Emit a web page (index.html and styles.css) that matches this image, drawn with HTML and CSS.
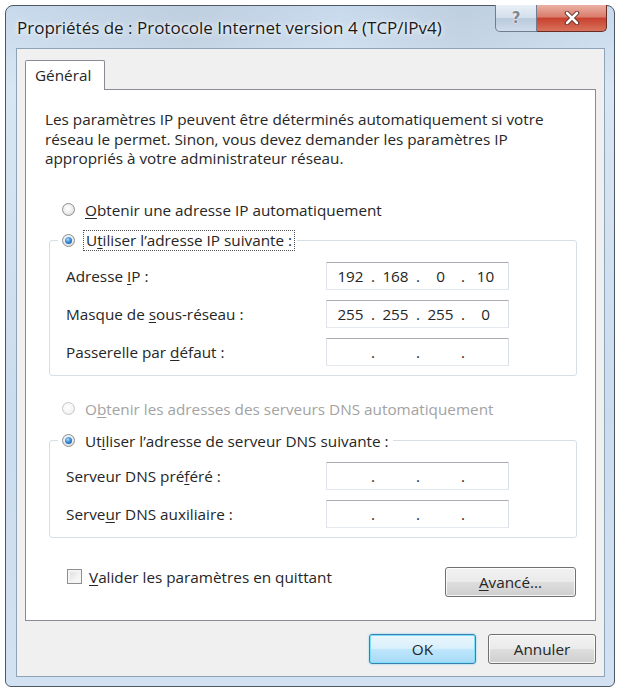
FILE: index.html
```html
<!DOCTYPE html>
<html lang="fr">
<head>
<meta charset="utf-8">
<title>Propriétés de : Protocole Internet version 4 (TCP/IPv4)</title>
<link rel="stylesheet" href="styles.css">
</head>
<body>
<div class="window">
  <div class="titlebar">
    <div class="title">Propriétés de : Protocole Internet version 4 (TCP/IPv4)</div>
    <div class="caption">
      <div class="cap-help">?</div>
      <div class="cap-close">
        <svg width="16" height="14" viewBox="0 0 16 14">
          <path d="M3 2 L13 12 M13 2 L3 12" stroke="#5a2a22" stroke-width="4.4" stroke-linecap="round"/>
          <path d="M3 2 L13 12 M13 2 L3 12" stroke="#ffffff" stroke-width="2.6" stroke-linecap="round"/>
        </svg>
      </div>
    </div>
  </div>
  <div class="client">
    <div class="tabs"><div class="tab">Général</div></div>
    <div class="panel">
      <p class="intro">Les paramètres IP peuvent être déterminés automatiquement si votre<br>réseau le permet. Sinon, vous devez demander les paramètres IP<br>appropriés à votre administrateur réseau.</p>

      <div class="radio-row first">
        <span class="radio"></span>
        <span class="label"><u>O</u>btenir une adresse IP automatiquement</span>
      </div>

      <fieldset class="group">
        <legend class="legend">
          <span class="radio-row">
            <span class="radio checked"></span>
            <span class="label focus">U<u>t</u>iliser l’adresse IP suivante :</span>
          </span>
        </legend>
        <div class="field-row">
          <span class="field-label">Adresse <u>I</u>P :</span>
          <div class="ip"><span class="oct">192</span><span class="dot">.</span><span class="oct">168</span><span class="dot">.</span><span class="oct">0</span><span class="dot">.</span><span class="oct">10</span></div>
        </div>
        <div class="field-row">
          <span class="field-label">Masque de <u>s</u>ous-réseau :</span>
          <div class="ip"><span class="oct">255</span><span class="dot">.</span><span class="oct">255</span><span class="dot">.</span><span class="oct">255</span><span class="dot">.</span><span class="oct">0</span></div>
        </div>
        <div class="field-row">
          <span class="field-label">Passerelle par <u>d</u>éfaut :</span>
          <div class="ip"><span class="oct"></span><span class="dot">.</span><span class="oct"></span><span class="dot">.</span><span class="oct"></span><span class="dot">.</span><span class="oct"></span></div>
        </div>
      </fieldset>

      <div class="radio-row disabled second">
        <span class="radio"></span>
        <span class="label">O<u>b</u>tenir les adresses des serveurs DNS automatiquement</span>
      </div>

      <fieldset class="group group-dns">
        <legend class="legend">
          <span class="radio-row">
            <span class="radio checked"></span>
            <span class="label">Ut<u>i</u>liser l’adresse de serveur DNS suivante :</span>
          </span>
        </legend>
        <div class="field-row">
          <span class="field-label">Serveur DNS pré<u>f</u>éré :</span>
          <div class="ip"><span class="oct"></span><span class="dot">.</span><span class="oct"></span><span class="dot">.</span><span class="oct"></span><span class="dot">.</span><span class="oct"></span></div>
        </div>
        <div class="field-row">
          <span class="field-label">Serve<u>u</u>r DNS auxiliaire :</span>
          <div class="ip"><span class="oct"></span><span class="dot">.</span><span class="oct"></span><span class="dot">.</span><span class="oct"></span><span class="dot">.</span><span class="oct"></span></div>
        </div>
      </fieldset>

      <div class="bottom-row">
        <div class="check-row">
          <span class="checkbox"></span>
          <span class="label"><u>V</u>alider les paramètres en quittant</span>
        </div>
        <div class="button advanced"><u>A</u>vancé...</div>
      </div>
    </div>
    <div class="footer">
      <div class="button default">OK</div>
      <div class="button cancel">Annuler</div>
    </div>
  </div>
</div>
</body>
</html>
```

FILE: styles.css
```css
* { box-sizing: border-box; }

body {
  margin: 0;
  background: #ffffff;
  font-family: "Open Sans", "Noto Sans", sans-serif;
  font-size: 15.3px;
  color: #262626;
}

u { text-decoration-thickness: 1px; text-underline-offset: 2px; }

.window {
  margin: 5px 0 0 5px;
  width: 610px;
  height: 682px;
  border: 1px solid #4d5864;
  border-radius: 8px 8px 6px 6px;
  background: linear-gradient(180deg, #c7d9ec 0%, #d9e6f3 12%, #cbdcee 60%, #d3e2f2 100%);
  padding: 0 9px 9px 10px;
  display: flex;
  flex-direction: column;
}

.titlebar {
  height: 42px;
  display: flex;
  align-items: flex-start;
  background: linear-gradient(90deg, rgba(255,255,255,0) 0%, rgba(150,160,170,0.18) 30%, rgba(255,255,255,0) 55%, rgba(140,150,160,0.15) 75%, rgba(255,255,255,0) 100%);
  margin: 0 -9px 0 -10px;
  padding: 0 7px 0 11px;
}

.title {
  padding-top: 11px;
  font-size: 17px;
  line-height: 22px;
  color: #1a1a1a;
  text-shadow: 0 0 6px #f4f8fc, 0 0 3px #f4f8fc;
}

.caption {
  margin-left: auto;
  margin-top: -1px;
  display: flex;
}

.cap-help {
  width: 42px;
  height: 27px;
  border: 1px solid #6e7e90;
  border-top: none;
  border-radius: 0 0 0 5px;
  background: linear-gradient(180deg, #e9f0f7 0%, #d3dfeb 48%, #b9cadc 52%, #cfdcea 100%);
  display: flex;
  align-items: center;
  justify-content: center;
  font-family: "DejaVu Sans", sans-serif;
  font-weight: bold;
  font-size: 15px;
  color: #7c8896;
  text-shadow: 0 0 1px #ffffff, 0 0 2px #ffffff;
}

.cap-close {
  width: 70px;
  height: 27px;
  border: 1px solid #6a2b24;
  border-top: none;
  border-left: none;
  border-radius: 0 0 5px 0;
  background: linear-gradient(180deg, #eab1a4 0%, #da7d6c 45%, #c8432f 52%, #d8725c 100%);
  display: flex;
  align-items: center;
  justify-content: center;
}

.client {
  flex: 1;
  background: #f0f0f0;
  border: 1px solid #8fa3b8;
  padding: 11px 8px 0 8px;
  display: flex;
  flex-direction: column;
}

.tabs { display: flex; }

.tab {
  position: relative;
  z-index: 1;
  width: 80px;
  height: 30px;
  margin-bottom: -1px;
  border: 1px solid #898c95;
  border-bottom: none;
  border-radius: 2px 2px 0 0;
  background: #ffffff;
  padding-left: 9px;
  line-height: 28px;
}

.panel {
  height: 532px;
  background: #ffffff;
  border: 1px solid #898c95;
  padding: 20px 18px 0 19px;
}

.intro {
  margin: 0;
  line-height: 19.5px;
}

.radio-row {
  display: flex;
  align-items: center;
  gap: 10px;
  height: 20px;
}

.radio-row.first { margin: 31px 0 0 17px; }
.radio-row.second { margin: 23px 0 0 17px; }

.radio {
  width: 13px;
  height: 13px;
  border-radius: 50%;
  border: 1px solid #8e8f8f;
  background: radial-gradient(circle at 45% 40%, #ffffff 0%, #f0f0f0 45%, #cfcfcf 100%);
  flex: none;
  display: flex;
  align-items: center;
  justify-content: center;
}

.radio.checked::after {
  content: "";
  width: 7px;
  height: 7px;
  border-radius: 50%;
  background: radial-gradient(circle at 40% 35%, #a9d8f8 0%, #3d8fd6 45%, #0d3f8c 100%);
}

.disabled .radio {
  border-color: #c8c8c8;
  background: radial-gradient(circle at 45% 40%, #ffffff 0%, #f4f4f4 60%, #e4e4e4 100%);
}

.disabled .label { color: #a3a3a3; }

.label.focus {
  outline: 1px dotted #555;
  outline-offset: 1px;
  padding: 0 1px;
  line-height: 17px;
}

.group {
  margin: 11px 0 0 4px;
  border: 1px solid #d5dfe5;
  border-radius: 3px;
  padding: 11px 8px 9px 16px;
  min-inline-size: 0;
  display: flex;
  flex-direction: column;
  gap: 10px;
}

.group-dns { margin-top: 12px; }

.legend {
  margin-left: -8px;
  padding: 0 4px;
}

.field-row {
  display: grid;
  grid-template-columns: 260px 183px;
  align-items: center;
  height: 28px;
}

.ip {
  height: 28px;
  background: #ffffff;
  border: 1px solid;
  border-color: #abadb3 #dbdfe6 #e3e9ef #e2e3ea;
  display: flex;
  align-items: center;
  padding-left: 5px;
}

.oct {
  width: 37px;
  text-align: center;
}

.dot {
  width: 8px;
  text-align: center;
}

.bottom-row {
  margin-top: 29px;
  display: flex;
  justify-content: space-between;
  align-items: flex-start;
}

.check-row {
  margin-left: 22px;
  display: flex;
  align-items: center;
  gap: 7px;
  height: 20px;
}

.checkbox {
  width: 15px;
  height: 15px;
  border: 1px solid #8e8f8f;
  background: linear-gradient(135deg, #dcdcdc 0%, #f2f2f2 60%, #ffffff 100%);
  box-shadow: inset 0 0 0 2px #f4f4f4;
}

.button {
  height: 30px;
  border: 1px solid #707070;
  border-radius: 3px;
  background: linear-gradient(180deg, #f2f2f2 0%, #ebebeb 48%, #dddddd 52%, #cfcfcf 100%);
  box-shadow: inset 0 0 0 1px rgba(255,255,255,0.8);
  display: flex;
  align-items: center;
  justify-content: center;
}

.advanced { width: 131px; margin-right: 1px; }

.footer {
  margin-top: 13px;
  display: flex;
  justify-content: flex-end;
  gap: 12px;
}

.default {
  width: 107px;
  border-color: #3c7fb1;
  background: linear-gradient(180deg, #eaf6fd 0%, #d9f0fc 48%, #bee6fd 52%, #a7d9f5 100%);
  box-shadow: inset 0 0 0 1px #7ee0f8, 0 0 2px #6fc6ef;
}

.cancel { width: 108px; }
```
